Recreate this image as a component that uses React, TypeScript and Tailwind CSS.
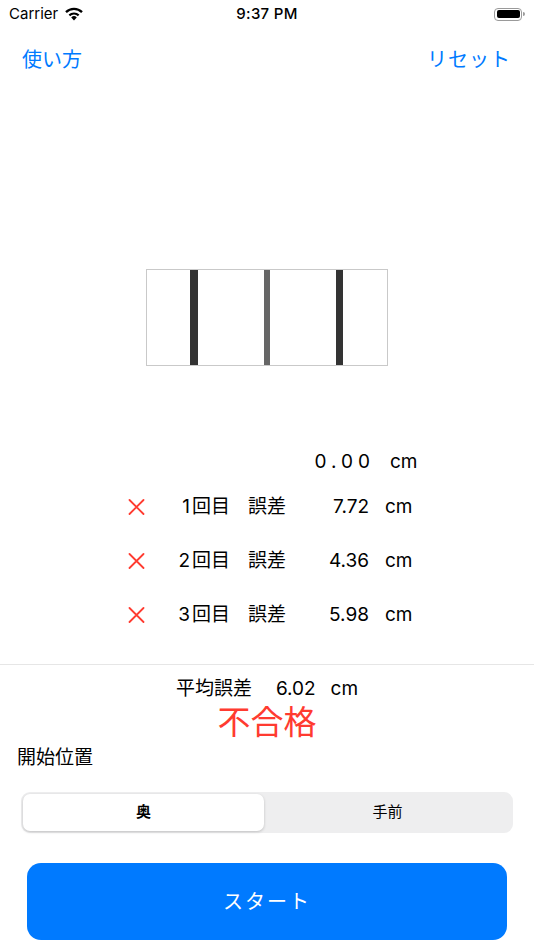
const font = { fontFamily: 'Inter, "Noto Sans CJK JP", sans-serif' };

function Cross() {
  return (
    <svg width="17" height="16" viewBox="0 0 17 16" className="shrink-0">
      <path d="M1.5 1 L15.5 15 M15.5 1 L1.5 15" stroke="#ff3b30" strokeWidth="1.8" strokeLinecap="round" />
    </svg>
  );
}

const rows = [
  { n: "1", v: "7.72" },
  { n: "2", v: "4.36" },
  { n: "3", v: "5.98" },
];

export default function App() {
  return (
    <div className="w-[534px] h-[950px] bg-white text-black overflow-hidden flex flex-col" style={font}>
      {/* status bar */}
      <div className="h-[28px] flex items-center px-[9px]">
        <div className="flex-1 flex items-center gap-[6px] text-[15px]">
          <span>Carrier</span>
          <svg width="20" height="14" viewBox="0 0 20 14">
            <path d="M10 13.5 L7.2 10.4 A4 4 0 0 1 12.8 10.4 Z" fill="#000" />
            <path d="M4.6 7.6 A7.8 7.8 0 0 1 15.4 7.6 L13.9 9.2 A5.6 5.6 0 0 0 6.1 9.2 Z" fill="#000" />
            <path d="M1.2 4.3 A12.4 12.4 0 0 1 18.8 4.3 L17.2 5.9 A10.1 10.1 0 0 0 2.8 5.9 Z" fill="#000" />
          </svg>
        </div>
        <div className="text-center text-[15px] font-medium tracking-[0.3px]">9:37 PM</div>
        <div className="flex-1 flex items-center justify-end">
          <div className="w-[28px] h-[13px] rounded-[4px] border border-[#9a9a9a] p-[1.5px]">
            <div className="w-full h-full rounded-[2px] bg-black" />
          </div>
          <div className="w-[2px] h-[4px] bg-[#9a9a9a] rounded-r-sm ml-[1px]" />
        </div>
      </div>

      {/* nav */}
      <div className="h-[64px] flex items-center justify-between pl-[22px] pr-[23px] text-[20px] text-[#007aff]">
        <span>使い方</span>
        <span className="tracking-[1px]">リセット</span>
      </div>

      {/* bar box */}
      <div className="mt-[177px] mx-auto w-[242px] h-[97px] border border-[#c9c9c9] flex">
        <div className="w-[43px]" />
        <div className="w-[8px] bg-[#333333]" />
        <div className="w-[66px]" />
        <div className="w-[6px] bg-[#666666]" />
        <div className="w-[66px]" />
        <div className="w-[7px] bg-[#333333]" />
      </div>

      {/* current value */}
      <div className="mt-[84px] h-[24px] flex items-center text-[19px]">
        <span className="ml-[290px] w-[85px] text-right tracking-[5px]">0.00</span>
        <span className="ml-[15px]">cm</span>
      </div>

      {/* results */}
      <div className="mt-[6px] flex flex-col">
        {rows.map((r) => (
          <div key={r.n} className="h-[54px] flex items-center text-[19px]">
            <span className="ml-[128px]"><Cross /></span>
            <span className="w-[85px] text-right">
              <span className="tracking-[2px]">{r.n}</span>回目
            </span>
            <span className="ml-[18px] w-[40px]">誤差</span>
            <span className="w-[81px] text-right">{r.v}</span>
            <span className="ml-[16px]">cm</span>
          </div>
        ))}
      </div>

      <div className="mt-[22px] h-px bg-[#e6e6e6]" />

      {/* average */}
      <div className="mt-[12px] h-[24px] flex items-center justify-center text-[19px]">
        <span>平均誤差</span>
        <span className="ml-[24px]">6.02</span>
        <span className="ml-[15px]">cm</span>
      </div>
      <div className="mt-[2px] h-[40px] flex items-center justify-center text-[33px] text-[#ff3b30]">
        不合格
      </div>

      <div className="mt-[3px] h-[24px] flex items-center px-[17px] text-[19px]">開始位置</div>

      {/* segmented */}
      <div className="mt-[22px] mx-[21px] h-[41px] rounded-[9px] bg-[#eeeeef] p-[2px] flex">
        <div className="w-[241px] rounded-[7px] bg-white shadow-[0_1px_3px_rgba(0,0,0,0.2)] flex items-center justify-center text-[15px] font-bold">
          奥
        </div>
        <div className="flex-1 flex items-center justify-center text-[15px]">手前</div>
      </div>

      {/* start button */}
      <div className="mt-[30px] mx-[27px] h-[77px] rounded-[14px] bg-[#007aff] flex items-center justify-center text-[20px] text-white tracking-[2px]">
        スタート
      </div>
    </div>
  );
}
